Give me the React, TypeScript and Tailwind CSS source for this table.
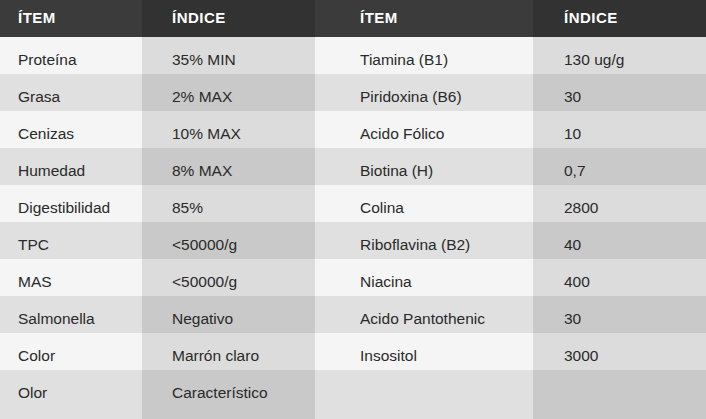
import React from 'react';

const rows = [
  ['Proteína', '35% MIN', 'Tiamina (B1)', '130 ug/g'],
  ['Grasa', '2% MAX', 'Piridoxina (B6)', '30'],
  ['Cenizas', '10% MAX', 'Acido Fólico', '10'],
  ['Humedad', '8% MAX', 'Biotina (H)', '0,7'],
  ['Digestibilidad', '85%', 'Colina', '2800'],
  ['TPC', '<50000/g', 'Riboflavina (B2)', '40'],
  ['MAS', '<50000/g', 'Niacina', '400'],
  ['Salmonella', 'Negativo', 'Acido Pantothenic', '30'],
  ['Color', 'Marrón claro', 'Insositol', '3000'],
  ['Olor', 'Característico', '', ''],
];

const App = () => {
  return (
    <div className="w-[706px] h-[419px] overflow-hidden text-[15.5px] text-[#2a2a2a]" style={{ fontFamily: '"Liberation Sans", Arial, sans-serif' }}>
      {/* Header */}
      <div className="flex h-[37px] text-white font-bold uppercase tracking-[0.5px] text-[15px]">
        <div className="w-[142px] bg-[#3b3b3b] pl-[18px] flex items-center">Ítem</div>
        <div className="w-[173px] bg-[#323232] pl-[30px] flex items-center">Índice</div>
        <div className="w-[218px] bg-[#3b3b3b] pl-[45px] flex items-center">Ítem</div>
        <div className="w-[173px] bg-[#323232] pl-[31px] flex items-center">Índice</div>
      </div>

      {rows.map((r, i) => {
        const light = i % 2 === 0;
        const last = i === rows.length - 1;
        return (
          <div key={i} className={`flex ${last ? 'h-[49px]' : 'h-[37px]'}`}>
            <div className={`w-[142px] pl-[18px] pt-[11px] ${light ? 'bg-[#f5f5f5]' : 'bg-[#e0e0e0]'}`}>{r[0]}</div>
            <div className={`w-[173px] pl-[30px] pt-[11px] ${light ? 'bg-[#dcdcdc]' : 'bg-[#c9c9c9]'}`}>{r[1]}</div>
            <div className={`w-[218px] pl-[45px] pt-[11px] ${light ? 'bg-[#f5f5f5]' : 'bg-[#e0e0e0]'}`}>{r[2]}</div>
            <div className={`w-[173px] pl-[31px] pt-[11px] ${light ? 'bg-[#dcdcdc]' : 'bg-[#c9c9c9]'}`}>{r[3]}</div>
          </div>
        );
      })}
    </div>
  );
};

export default App;
